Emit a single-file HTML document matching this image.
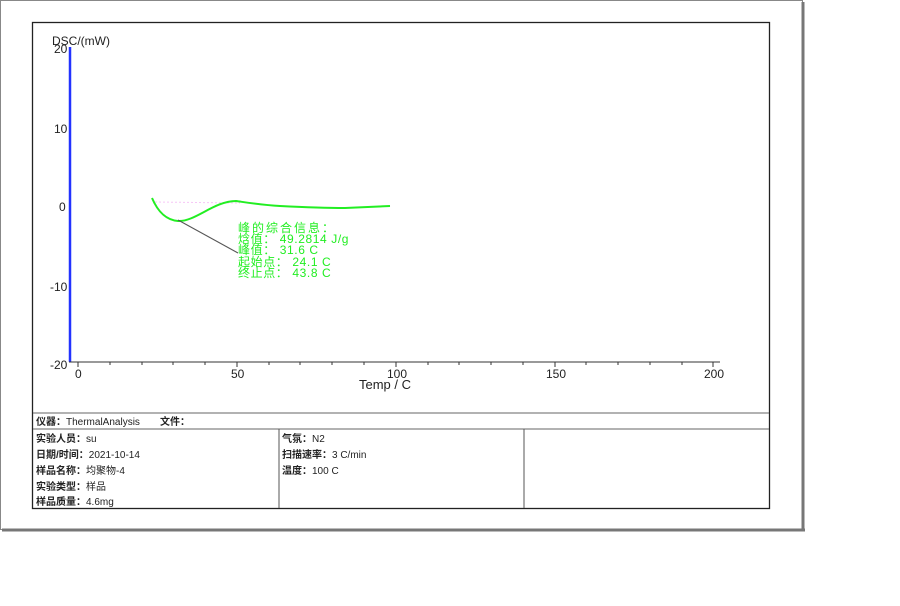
<!DOCTYPE html>
<html><head><meta charset="utf-8"><style>
body{margin:0;background:#fff;width:900px;height:606px;overflow:hidden;font-family:"Liberation Sans","Noto Sans CJK SC",sans-serif}
</style></head><body>
<svg width="900" height="606" xmlns="http://www.w3.org/2000/svg" style="position:absolute;left:0;top:0">
<rect x="0.5" y="0.5" width="802" height="529" fill="none" stroke="#888" stroke-width="1"/>
<line x1="803" y1="2" x2="803" y2="531" stroke="#777" stroke-width="3"/>
<line x1="2" y1="530" x2="805" y2="530" stroke="#777" stroke-width="3"/>
<rect x="32.5" y="22.5" width="737" height="486" fill="#fff" stroke="#222" stroke-width="1.3"/>
<line x1="33" y1="413" x2="769" y2="413" stroke="#666"/>
<line x1="33" y1="429" x2="769" y2="429" stroke="#666"/>
<line x1="279" y1="429" x2="279" y2="508" stroke="#555"/>
<line x1="524" y1="429" x2="524" y2="508" stroke="#555"/>
<g font-family="Liberation Sans, sans-serif" fill="#222">
<text x="52" y="45" font-size="12">DSC/(mW)</text>
<text x="54" y="53" font-size="12">20</text>
<text x="54" y="133" font-size="12">10</text>
<text x="59" y="211" font-size="12">0</text>
<text x="50" y="291" font-size="12">-10</text>
<text x="50" y="369" font-size="12">-20</text>
<text x="75" y="378" font-size="12">0</text>
<text x="231" y="378" font-size="12">50</text>
<text x="387" y="378" font-size="12">100</text>
<text x="546" y="378" font-size="12">150</text>
<text x="704" y="378" font-size="12">200</text>
<text x="359" y="389" font-size="13">Temp / C</text>
</g>
<line x1="70" y1="47" x2="70" y2="362" stroke="#2233ff" stroke-width="2.5"/>
<g stroke="#333" stroke-width="1">
<line x1="69" y1="362" x2="720" y2="362"/>
<path d="M78 362v5M110 362v3M142 362v3M173 362v3M205 362v3M237 362v5M269 362v3M300 362v3M332 362v3M364 362v3M396 362v5M428 362v3M459 362v3M491 362v3M523 362v3M555 362v5M586 362v3M618 362v3M650 362v3M682 362v3M713 362v5"/>
</g>
<line x1="155" y1="202" x2="240" y2="203" stroke="#f6c6f6" stroke-dasharray="2,2"/>
<path d="M152 198 C158 212,166 220,178 221 C195 222,214 201,236 201 C250 203,262 205,280 206 C300 207,320 208,345 208 L390 206" fill="none" stroke="#22ee22" stroke-width="2"/>
<line x1="178" y1="220" x2="238" y2="253" stroke="#555" stroke-width="1"/>
<g fill="#22ee22" font-size="12" font-family="Liberation Sans, Noto Sans CJK SC, sans-serif">
<text x="238" y="232" letter-spacing="2">峰的综合信息：</text>
<text x="238" y="243" letter-spacing="0.6">焓值： 49.2814 J/g</text>
<text x="238" y="254" letter-spacing="0.6">峰值： 31.6 C</text>
<text x="238" y="266" letter-spacing="0.6">起始点： 24.1 C</text>
<text x="238" y="277" letter-spacing="0.6">终止点： 43.8 C</text>
</g>
<g font-size="10" fill="#222" font-family="Liberation Sans, Noto Sans CJK SC, sans-serif">
<text x="36" y="425"><tspan font-weight="bold">仪器：</tspan>ThermalAnalysis</text>
<text x="160" y="425" font-weight="bold">文件：</text>
<text x="36" y="442"><tspan font-weight="bold">实验人员：</tspan>su</text>
<text x="36" y="458"><tspan font-weight="bold">日期/时间：</tspan>2021-10-14</text>
<text x="36" y="474"><tspan font-weight="bold">样品名称：</tspan>均聚物-4</text>
<text x="36" y="490"><tspan font-weight="bold">实验类型：</tspan>样品</text>
<text x="36" y="505"><tspan font-weight="bold">样品质量：</tspan>4.6mg</text>
<text x="282" y="442"><tspan font-weight="bold">气氛：</tspan>N2</text>
<text x="282" y="458"><tspan font-weight="bold">扫描速率：</tspan>3 C/min</text>
<text x="282" y="474"><tspan font-weight="bold">温度：</tspan>100 C</text>
</g>
</svg>
</body></html>
